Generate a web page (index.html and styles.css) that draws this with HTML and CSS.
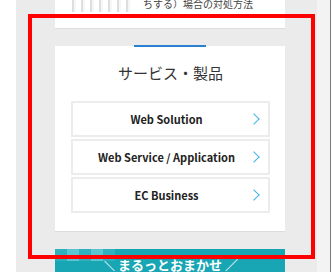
FILE: index.html
```html
<!DOCTYPE html>
<html lang="ja">
<head>
    <meta charset="UTF-8">
    <meta name="viewport" content="width=device-width, initial-scale=1.0">
    <title>サービス・製品</title>
    <link rel="stylesheet" href="styles.css">
</head>
<body>
    <div class="page">
        <div class="side-left"></div>

        <div class="main">
            <div class="card card-prev">
                <div class="prev-row">
                    <div class="thumb"></div>
                    <p class="prev-text">ちする）場合の対処方法</p>
                </div>
            </div>

            <div class="card services">
                <span class="accent"></span>
                <h2>サービス・製品</h2>
                <ul class="service-list">
                    <li><a href="#">Web Solution</a></li>
                    <li><a href="#">Web Service / Application</a></li>
                    <li><a href="#">EC Business</a></li>
                </ul>
            </div>

            <div class="banner">
                <div class="tiles">
                    <span></span><span class="light"></span><span></span><span class="light"></span><span></span>
                </div>
                <p>＼ まるっとおまかせ ／</p>
            </div>
        </div>

        <div class="side-right"></div>
    </div>

    <!-- highlight frame drawn over the screenshot -->
    <div class="highlight"></div>
</body>
</html>
```

FILE: styles.css
```css
body {
    margin: 0;
    padding: 0;
    font-family: "Noto Sans CJK JP", "Noto Sans", sans-serif;
    color: #333;
    overflow: hidden;
}
.page {
    display: flex;
    width: 331px;
    height: 272px;
    overflow: hidden;
}
.side-left {
    width: 16px;
    background-color: #fff;
    flex-shrink: 0;
}
.main {
    flex: 1;
    background-color: #ebebeb;
    padding: 0 32px 0 39px;
    display: flex;
    flex-direction: column;
    gap: 17px;
}
.side-right {
    width: 13px;
    background-color: #f3f3f3;
    border-right: 1px solid #7a7a6e;
    flex-shrink: 0;
}
.card {
    background-color: #fff;
    border-bottom: 1px solid #dcdcdc;
    flex-shrink: 0;
}
.card-prev {
    height: 28px;
    overflow: hidden;
}
.prev-row {
    display: flex;
    align-items: flex-start;
    gap: 8px;
    padding-left: 17px;
    margin-top: -4px;
}
.thumb {
    width: 63px;
    height: 16px;
    background: repeating-linear-gradient(90deg, #d6d6d6 0 2px, #f4f4f4 2px 4px, #fff 4px 9px);
    opacity: 0.8;
}
.prev-text {
    margin: 0;
    font-size: 10px;
    line-height: 16px;
    color: #444;
}
.services {
    position: relative;
    padding: 0 15px 18px 16px;
}
.accent {
    position: absolute;
    top: -1px;
    left: 79px;
    width: 72px;
    height: 2px;
    background-color: #2a7fd0;
}
.services h2 {
    margin: 0;
    padding: 16px 0 17px;
    text-align: center;
    font-size: 15px;
    font-weight: normal;
    line-height: 22px;
    color: #333;
}
.service-list {
    list-style: none;
    margin: 0;
    padding: 0;
    display: flex;
    flex-direction: column;
    gap: 2px;
}
.service-list a {
    position: relative;
    display: block;
    height: 32px;
    line-height: 32px;
    border: 2px solid #ececec;
    text-align: center;
    padding-right: 8px;
    font-size: 11px;
    font-weight: bold;
    color: #222;
    text-decoration: none;
}
.service-list a::after {
    content: "";
    position: absolute;
    right: 10px;
    top: 12px;
    width: 7px;
    height: 7px;
    border-top: 1.5px solid #42b4e6;
    border-right: 1.5px solid #42b4e6;
    transform: rotate(45deg);
}
.banner {
    position: relative;
    height: 40px;
    background-color: #18a5b4;
    flex-shrink: 0;
    overflow: hidden;
}
.tiles {
    position: absolute;
    left: 0;
    top: 0;
    display: flex;
}
.tiles span {
    width: 12px;
    height: 12px;
    background-color: #2fb1be;
}
.tiles span.light {
    background-color: #5cc6d0;
}
.banner p {
    margin: 0;
    padding-top: 6px;
    text-align: center;
    font-size: 13px;
    font-weight: bold;
    color: #fff;
    line-height: 20px;
}
.highlight {
    position: absolute;
    left: 28px;
    top: 14px;
    width: 287px;
    height: 245px;
    box-sizing: border-box;
    border: 4px solid #ff0000;
}
```
